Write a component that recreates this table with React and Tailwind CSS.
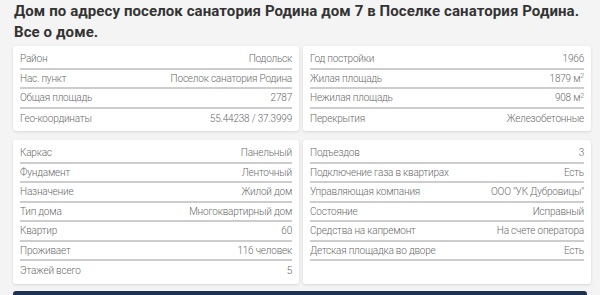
const group1 = {
  left: [
    ["Район", "Подольск"],
    ["Нас. пункт", "Поселок санатория Родина"],
    ["Общая площадь", "2787"],
    ["Гео-координаты", "55.44238 / 37.3999"],
  ],
  right: [
    ["Год постройки", "1966"],
    ["Жилая площадь", <>1879 м<sup className="text-[7px]">2</sup></>],
    ["Нежилая площадь", <>908 м<sup className="text-[7px]">2</sup></>],
    ["Перекрытия", "Железобетонные"],
  ],
};

const group2 = {
  left: [
    ["Каркас", "Панельный"],
    ["Фундамент", "Ленточный"],
    ["Назначение", "Жилой дом"],
    ["Тип дома", "Многоквартирный дом"],
    ["Квартир", "60"],
    ["Проживает", "116 человек"],
    ["Этажей всего", "5"],
  ],
  right: [
    ["Подъездов", "3"],
    ["Подключение газа в квартирах", "Есть"],
    ["Управляющая компания", "ООО \"УК Дубровицы\""],
    ["Состояние", "Исправный"],
    ["Средства на капремонт", "На счете оператора"],
    ["Детская площадка во дворе", "Есть"],
  ],
};

const card = "bg-white rounded-[3px] shadow-[0_1px_3px_rgba(0,0,0,0.12)] px-[7px] pt-[4px] pb-[3px]";
const row = "h-[19.5px] flex items-center justify-between text-[10px] font-light tracking-[-0.2px] text-[#6a6a6a]";

function InfoCard({ rows, lastBorder, className = "" }) {
  return (
    <div className={card + " " + className}>
      {rows.map(([label, value], i) => (
        <div
          key={i}
          className={row + (i < rows.length - 1 || lastBorder ? " border-b-2 border-[#cdcdcd]" : "")}
        >
          <span>{label}</span>
          <span>{value}</span>
        </div>
      ))}
    </div>
  );
}

export default function App() {
  return (
    <div className="w-[600px] h-[295px] overflow-hidden bg-[#f4f4f4] px-[13px] font-['Roboto',sans-serif]">
      <h1 className="pl-[1px] pt-[1px] text-[15px] leading-[21px] font-bold tracking-[0.1px] whitespace-nowrap text-[#333] font-['Roboto',sans-serif]">
        Дом по адресу поселок санатория Родина дом 7 в Поселке санатория Родина.
        <br />
        Все о доме.
      </h1>
      <div className="mt-[3px] grid grid-cols-[286px_288px] gap-x-[4px] gap-y-[9px] items-start">
        <InfoCard rows={group1.left} />
        <InfoCard rows={group1.right} />
        <InfoCard rows={group2.left} />
        <InfoCard rows={group2.right} lastBorder className="self-stretch" />
      </div>
      <div className="mt-[7px] h-[20px] rounded-t-[3px] bg-[#1f3253]" />
    </div>
  );
}
